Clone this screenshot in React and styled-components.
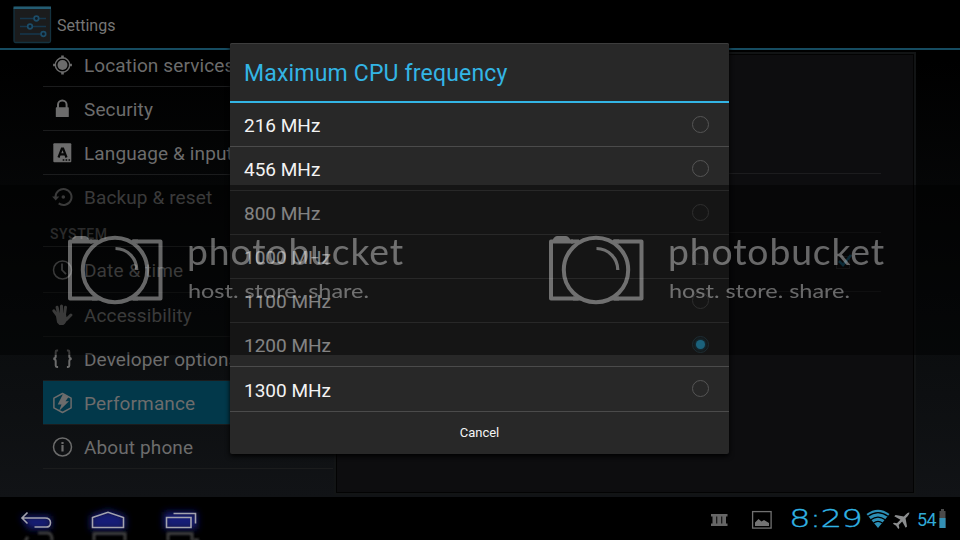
import React from "react";
import styled, { createGlobalStyle } from "styled-components";

const Global = createGlobalStyle`
  body { margin: 0; background: #000; }
  * { box-sizing: border-box; }
`;

const Screen = styled.div`
  position: relative;
  display: flex;
  flex-direction: column;
  width: 960px;
  height: 540px;
  overflow: hidden;
  background: #000;
  font-family: Roboto, "Liberation Sans", sans-serif;
`;

const AppArea = styled.div`
  display: flex;
  flex-direction: column;
  height: 497px;
  background: linear-gradient(#000 0, #000 60px, #090b0c 290px, #111316 497px);
`;

const Header = styled.header`
  display: flex;
  align-items: center;
  gap: 5px;
  flex: none;
  height: 50px;
  padding: 2px 0 0 12px;
  border-bottom: 2px solid #164c61;
`;

const HeaderTitle = styled.h1`
  margin: 0;
  font-size: 16px;
  font-weight: 400;
  color: #767676;
`;

const Body = styled.div`
  display: flex;
  flex: 1;
  min-height: 0;
  overflow: hidden;
  padding-left: 43px;
`;

const List = styled.nav`
  flex: none;
  width: 290px;
  margin-top: -7px;
`;

const Row = styled.div`
  display: flex;
  align-items: center;
  gap: 11px;
  height: ${(p) => p.$h || 44}px;
  padding: 2px 0 0 9px;
  font-size: 19px;
  letter-spacing: 0.12px;
  white-space: nowrap;
  color: #6c6c6c;
  border-bottom: 1px solid ${(p) => (p.$last ? "transparent" : "#1b1c1d")};
  background: ${(p) => (p.$active ? "#02384a" : "transparent")};
  svg { flex: none; margin-top: -2px; }
`;

const Section = styled.div`
  height: 28px;
  padding: 7px 0 0 7px;
  font-size: 14px;
  line-height: 16px;
  font-weight: 500;
  letter-spacing: 0.6px;
  color: #515151;
  border-bottom: 1px solid #242526;
`;

const Pane = styled.section`
  width: 582px;
  height: 443px;
  margin: 2px 0 0 1px;
  padding: 0 33px 0 12px;
  border: 2px solid #121415;
  box-shadow: inset 0 0 0 1px #030303;
  background: #0d0d0f;
`;

const Preference = styled.div`
  display: flex;
  align-items: center;
  justify-content: flex-end;
  height: ${(p) => p.$h}px;
  padding-right: 28px;
  border-bottom: 1px solid #1c1c1e;
`;

const Dialog = styled.div`
  position: absolute;
  left: 230px;
  top: 43px;
  width: 499px;
  height: 411px;
  display: flex;
  flex-direction: column;
  border-radius: 2px;
  background: #282828;
  box-shadow: 0 2px 5px #000, inset 0 1px 0 #3d3d3d;
`;

const DialogTitle = styled.h2`
  height: 60px;
  margin: 0;
  padding: 2px 14px 0;
  line-height: 58px;
  font-size: 23px;
  font-weight: 400;
  letter-spacing: 0.18px;
  color: #33b5e5;
  border-bottom: 2px solid #33b5e5;
`;

const Option = styled.div`
  display: flex;
  align-items: center;
  justify-content: space-between;
  height: ${(p) => p.$h || 44}px;
  padding: 2px 20px 0 14px;
  font-size: 19px;
  letter-spacing: 0;
  color: #f3f3f3;
  border-bottom: 1px solid #4b4b4b;
`;

const Radio = styled.span`
  display: grid;
  place-items: center;
  width: 17px;
  height: 17px;
  margin-top: -3px;
  border: 1px solid ${(p) => (p.$on ? "#37515c" : "#555")};
  border-radius: 50%;
  &::after {
    content: "";
    width: 9px;
    height: 9px;
    border-radius: 50%;
    background: ${(p) => (p.$on ? "#33b5e5" : "transparent")};
    box-shadow: ${(p) => (p.$on ? "0 0 3px 1px #23627a" : "none")};
  }
`;

const Cancel = styled.button`
  flex: 1;
  border: 0;
  padding: 0 0 2px;
  background: none;
  font: 400 13px Roboto, sans-serif;
  color: #f4f4f4;
`;

const Band = styled.div`
  position: absolute;
  left: 0;
  top: 185px;
  width: 960px;
  height: 170px;
  display: flex;
  background: rgba(0, 0, 0, 0.46);
`;

const Mark = styled.svg`
  flex: none;
  width: 481px;
  height: 170px;
`;

const NavBar = styled.footer`
  display: flex;
  justify-content: space-between;
  height: 43px;
  background: #000;
`;

const NavButtons = styled.div`
  display: flex;
`;

const Status = styled.div`
  display: flex;
  align-items: flex-start;
  padding: 12px 14px 0 0;
  svg { display: block; flex: none; overflow: visible; }
`;

const Percent = styled.span`
  width: 22px;
  font-size: 18px;
  line-height: 22px;
  letter-spacing: -0.7px;
  color: #2fa8d5;
`;

const icons = {
  location: (
    <g fill="none" stroke="currentColor">
      <circle cx="11" cy="11" r="7.2" strokeWidth="1.4" />
      <circle cx="11" cy="11" r="5" fill="currentColor" stroke="none" />
      <path d="M11 1.6v3M11 17.4v3M1.6 11h3M17.4 11h3" strokeWidth="2.6" />
    </g>
  ),
  lock: (
    <g>
      <path d="M6.5 10V6.8a4.3 4.3 0 0 1 8.6 0V10" fill="none" stroke="currentColor" strokeWidth="2" />
      <rect x="4.3" y="9.3" width="13" height="9.7" rx="0.6" fill="currentColor" />
    </g>
  ),
  language: (
    <g>
      <rect x="1.8" y="1.2" width="18" height="19" rx="1" fill="currentColor" />
      <path d="M7 15.5l3.4-9h1.2l3.4 9M8.3 12.4h5.4" fill="none" stroke="#060707" strokeWidth="2.2" />
      <path d="M11.2 18h1.6M14.1 18h1.6M17 18h1.6" stroke="#060707" strokeWidth="1.6" />
    </g>
  ),
  backup: (
    <g>
      <path d="M4 11a8 8 0 1 1 3.2 6.4" fill="none" stroke="currentColor" strokeWidth="2" />
      <path d="M0.6 10.6h7.2l-3.6 4z" fill="currentColor" />
      <circle cx="11.8" cy="11" r="1.8" fill="currentColor" />
    </g>
  ),
  clock: (
    <g fill="none" stroke="currentColor" strokeWidth="1.5">
      <circle cx="11" cy="11" r="9" />
      <path d="M10.5 4.5V11l4 4.2" strokeWidth="1.8" />
    </g>
  ),
  hand: (
    <g fill="none" stroke="currentColor" strokeWidth="3" strokeLinecap="round" strokeLinejoin="round">
      <path d="M5.4 11L2.4 6.8M7.2 10.3L5.6 3.3M10 9.6V2M13 10.3l1-7M15.2 15.2l4.2-4.2" />
      <path d="M5.2 11l2-1.200h6.200l1 4.600 1.800-.6-3.400 5.200-1.300 1.200H8.300l-1.900-2z" fill="currentColor" strokeWidth="1.800" />
    </g>
  ),
  braces: (
    <g fill="none" stroke="currentColor" strokeWidth="2">
      <path d="M6.600 2.600H5.400q-1.200 0-1.200 1.400v4.500q0 1.800-2.200 2.300 2.200.5 2.200 2.300V17.600q0 1.400 1.200 1.400h1.200" />
      <path d="M15.400 2.600h1.200q1.200 0 1.200 1.400v4.500q0 1.800 2.200 2.300-2.200.5-2.200 2.300V17.600q0 1.400-1.200 1.400h-1.200" />
    </g>
  ),
  bolt: (
    <g>
      <path d="M11 1.500l8.600 4.700v9.600L11 20.500l-8.600-4.700V6.200z" fill="none" stroke="currentColor" strokeWidth="1.500" strokeLinejoin="round" />
      <path d="M11.500 2l5.500 3-3 4.200h3.500L7.500 19l2.500-6.500H6.200z" fill="currentColor" />
    </g>
  ),
  info: (
    <g>
      <circle cx="11" cy="11" r="9" fill="none" stroke="currentColor" strokeWidth="1.500" />
      <path d="M11 9v6.500M11 5.900v2" stroke="currentColor" strokeWidth="2.200" />
    </g>
  ),
};

const Icon = ({ name }) => (
  <svg width="21" height="22" viewBox="0.500 0 21 22">{icons[name]}</svg>
);

const SettingsIcon = () => (
  <svg width="40" height="38" viewBox="0 0 40 38">
    <rect x="2" y="1.500" width="36.500" height="35" rx="1.500" fill="#1b1c1d" stroke="#14323f" strokeWidth="1.300" />
    <path d="M1.500 1.800h37.500" stroke="#245c72" strokeWidth="2.400" />
    <path d="M8 12.500h14.500M26 12.500h8M8 20.500h7.500M20 20.500h14M8 28h21" stroke="#16374d" strokeWidth="1.500" />
    <g fill="#101c24" stroke="#1c4c68" strokeWidth="1.700">
      <circle cx="24.400" cy="12.500" r="2.300" />
      <circle cx="18" cy="20.500" r="2.300" />
      <circle cx="31.400" cy="28" r="2.300" />
    </g>
  </svg>
);

const Watermark = () => (
  <Mark viewBox="0 185 481 170">
    <g opacity="0.390">
      <g fill="none" stroke="#fff" strokeWidth="4">
        <path d="M92 241.500H70V298.500H97.500M133 298.500H160.500V241.500H133" strokeLinejoin="round" />
        <path d="M90 241.500h8M132 241.500h6M92 298.500h8M130 298.500h8" />
        <circle cx="115" cy="270" r="32.200" />
        <path d="M115.500 248.500A21.500 21.500 0 0 1 136.800 270" strokeWidth="3.200" />
        <path d="M71.500 240.500q1.500-4.500 5-4.500h8q3.500 0 5 4.500z" fill="#fff" stroke="none" />
      </g>
      <g fill="#fff" fontFamily="Lato, sans-serif">
        <text x="187" y="264.500" fontSize="37.500" letterSpacing="0.900" textLength="217" lengthAdjust="spacingAndGlyphs">photobucket</text>
        <text x="188" y="297.500" fontSize="20" textLength="181" lengthAdjust="spacingAndGlyphs">host. store. share.</text>
      </g>
    </g>
  </Mark>
);

const navPaths = {
  back: ["M27.500 15.500L22 21l5.500 5.500M22 21h23q5.500 0 5.500 4.800T45 30H34.500", "M24 21h25v9H30z", "M25 44l3-4M38 36h10q4 0 4 8"],
  home: ["M20.500 20.500L36 15.300l15.500 5.200V30.500h-31z", "M20.500 20.500L36 15.300l15.500 5.200V30.500h-31z", "M22 44v-7.500h31V44"],
  recent: ["M22.500 20.500h24.500v10h-24.500zM29.500 16.500h22V26.500", "M22 17h29v13H22z", "M24 44v-7.500h24V44M50 43h5"],
};

const NavIcon = ({ kind }) => (
  <svg width="72" height="43" viewBox="0 0 72 43">
    <defs>
      <filter id={`glow-${kind}`} x="-50%" y="-80%" width="200%" height="260%">
        <feGaussianBlur stdDeviation="3.500" />
      </filter>
      <filter id={`soft-${kind}`} x="-30%" y="-60%" width="160%" height="220%">
        <feGaussianBlur stdDeviation="1.100" />
      </filter>
    </defs>
    <path d={navPaths[kind][1]} fill="#141f78" stroke="#141f78" strokeWidth="4" filter={`url(#glow-${kind})`} />
    <path d={navPaths[kind][2]} fill="none" stroke="#3d3d3d" strokeWidth="3" filter={`url(#soft-${kind})`} />
    <path d={navPaths[kind][0]} fill="none" stroke="#a3a3ae" strokeWidth="1.600" />
  </svg>
);

const StatusIcons = () => (
  <>
    <svg width="81" height="22" viewBox="0 0 81 22">
      <path d="M1 5h16.500v2.500H16v7h1.500V17H1v-2.500h1.500v-7H1z" fill="#666" />
      <path d="M6.700 7.500v7M11.700 7.500v7" stroke="#161616" strokeWidth="1.200" />
      <rect x="42.600" y="2.600" width="18.500" height="16.500" fill="none" stroke="#707070" strokeWidth="1.300" />
      <path d="M45 17v-3.500l3.500-3.500 3 2.500 2.500-1.500 5 3V17z" fill="#747474" />
    </svg>
    <svg width="75" height="22" viewBox="0 0 75 22">
      <text x="-2" y="18" letterSpacing="-0.600" textLength="73" lengthAdjust="spacingAndGlyphs" fontFamily="'DejaVu Sans', sans-serif" fontWeight="200" fontSize="24" fill="#30b4e5" stroke="#30b4e5" strokeWidth="0.300">8:29</text>
    </svg>
    <svg width="51" height="22" viewBox="0 0 51 22">
      <path d="M0.500 5Q12-3.500 23.500 5L12 19z" fill="#2c8fb6" />
      <path d="M2 7.300Q12 0 22 7.300M4.800 10.800Q12 5.500 19.200 10.800M7.500 14Q12 10.700 16.500 14" fill="none" stroke="#000" strokeWidth="1.200" />
      <g transform="translate(36 11) rotate(45) scale(0.950)">
        <path d="M0-11q1.300.8 1.300 4v3L8.500 1v2L1.300 1v5.200L4 8v1.500L0 8.700-4 9.500V8l2.700-1.800V1l-7.200 2V1l7.200-5v-3q0-3.200 1.300-4z" fill="#8b8d8e" />
      </g>
    </svg>
  </>
);

const Battery = () => (
  <svg width="7" height="22" viewBox="0 0 7 22">
    <path d="M2 0h3v2h1.500v17H.5V2H2z" fill="#4a4a4a" />
    <path d="M.5 9h6v10h-6z" fill="#3390b5" />
  </svg>
);

const options = ["216 MHz", "456 MHz", "800 MHz", "1000 MHz", "1100 MHz", "1200 MHz", "1300 MHz"];

export default function App() {
  return (
    <Screen>
      <Global />
      <AppArea>
        <Header>
          <SettingsIcon />
          <HeaderTitle>Settings</HeaderTitle>
        </Header>
        <Body>
          <List>
            <Row><Icon name="location" />Location services</Row>
            <Row><Icon name="lock" />Security</Row>
            <Row><Icon name="language" />Language &amp; input</Row>
            <Row $last><Icon name="backup" />Backup &amp; reset</Row>
            <Section>SYSTEM</Section>
            <Row $h={46}><Icon name="clock" />Date &amp; time</Row>
            <Row><Icon name="hand" />Accessibility</Row>
            <Row><Icon name="braces" />Developer options</Row>
            <Row $active><Icon name="bolt" />Performance</Row>
            <Row><Icon name="info" />About phone</Row>
          </List>
          <Pane>
            <Preference $h={120} />
            <Preference $h={59} />
            <Preference $h={59}>
              <svg width="18" height="16" viewBox="0 0 18 16">
                <rect x="1.500" y="2.500" width="13" height="12" fill="none" stroke="#252628" />
                <path d="M4 7l4 4 8-10" fill="none" stroke="#164f66" strokeWidth="2.600" />
              </svg>
            </Preference>
          </Pane>
        </Body>
      </AppArea>
      <NavBar>
        <NavButtons>
          <NavIcon kind="back" />
          <NavIcon kind="home" />
          <NavIcon kind="recent" />
        </NavButtons>
        <Status>
          <StatusIcons />
          <Percent>54</Percent>
          <Battery />
        </Status>
      </NavBar>
      <Dialog>
        <DialogTitle>Maximum CPU frequency</DialogTitle>
        {options.map((label, i) => (
          <Option key={label} $h={i === 6 ? 45 : 44}>
            {label}
            <Radio $on={i === 5} />
          </Option>
        ))}
        <Cancel>Cancel</Cancel>
      </Dialog>
      <Band>
        <Watermark />
        <Watermark />
      </Band>
    </Screen>
  );
}
